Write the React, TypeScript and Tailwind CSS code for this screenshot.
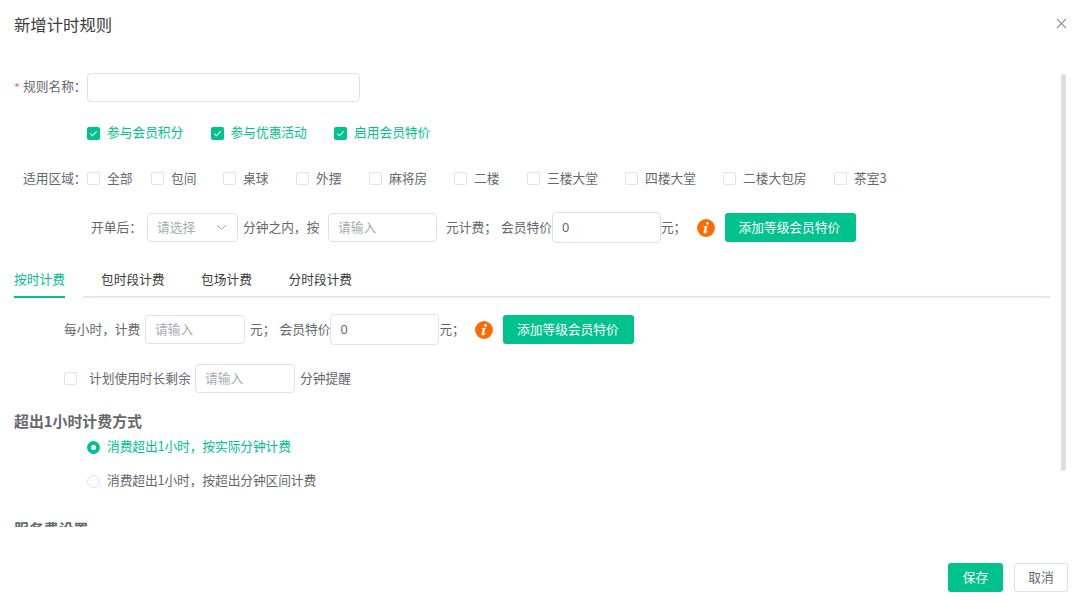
import React from "react";

type Tone = "plain" | "green";

function Tick({ on = false }: { on?: boolean }) {
  return on ? (
    <span className="flex h-[13px] w-[13px] shrink-0 items-center justify-center rounded-[2px] bg-[#00c28c]">
      <svg width="13" height="13" viewBox="0 0 13 13" fill="none" stroke="#fff" strokeWidth="1.1">
        <path d="M3.4 6.6 5.5 8.8 9.6 4.3" />
      </svg>
    </span>
  ) : (
    <span className="h-[13px] w-[13px] shrink-0 rounded-[2px] border border-[#e2e4ea] bg-white" />
  );
}

function Check({ label, on, className = "" }: { label: string; on?: boolean; className?: string }) {
  return (
    <label className={`flex shrink-0 items-center gap-[7px] ${className}`}>
      <Tick on={on} />
      <span className={on ? "pb-[2px] text-[#00c28c]" : "pb-px"}>{label}</span>
    </label>
  );
}

function Radio({ label, tone = "plain" }: { label: string; tone?: Tone }) {
  return (
    <label className="flex h-[18px] items-center gap-[7px]">
      {tone === "green" ? (
        <span className="flex h-[13px] w-[13px] items-center justify-center rounded-full bg-[#00c28c]">
          <span className="h-[5px] w-[5px] rounded-full bg-white" />
        </span>
      ) : (
        <span className="h-[13px] w-[13px] rounded-full border border-[#e0e2e9]" />
      )}
      <span className={tone === "green" ? "pb-[2px] tracking-[-0.09px] text-[#00c28c]" : "pb-[2px] tracking-[-0.09px]"}>
        {label}
      </span>
    </label>
  );
}

function Field({ value, placeholder, className }: { value?: string; placeholder?: string; className: string }) {
  return (
    <div className={`flex shrink-0 items-center rounded-[4px] border border-[#e0e2e9] bg-white pl-[9px] ${className}`}>
      {value ? (
        <span className="pb-px font-['Noto_Sans',sans-serif]">{value}</span>
      ) : (
        <span className="pb-px text-[#a8abb2]">{placeholder}</span>
      )}
    </div>
  );
}

function Info() {
  return (
    <svg className="shrink-0" width="18" height="18" viewBox="0 0 18 18">
      <circle cx="9" cy="9" r="8.9" fill="#ff6a00" />
      <circle cx="10.5" cy="4.4" r="1.4" fill="#fff" />
      <path d="M6.6 7.3 10.6 6.7 9 12.5Q8.9 13.1 9.4 12.7L10.4 11.7 10.8 12Q9.4 14.4 7.7 14.4 6.2 14.3 6.6 12.7L7.8 8.4Q7.8 7.9 6.6 7.9Z" fill="#fff" />
    </svg>
  );
}

function MemberPrice() {
  return (
    <div className="flex items-center pt-px">
      <span className="pb-px">会员特价</span>
      <Field value="0" className="h-[31px] w-[109px]" />
      <span className="w-[36px] pb-px">元；</span>
      <Info />
      <button className="ml-[10px] h-[29px] w-[131px] rounded-[3px] bg-[#00c28c] pr-[2px] pb-[2px] text-white">
        添加等级会员特价
      </button>
    </div>
  );
}

const areas = [
  { label: "全部", width: "w-[64px]" },
  { label: "包间", width: "w-[72px]" },
  { label: "桌球", width: "w-[73px]" },
  { label: "外摆", width: "w-[73px]" },
  { label: "麻将房", width: "w-[85px]" },
  { label: "二楼", width: "w-[73px]" },
  { label: "三楼大堂", width: "w-[98px]" },
  { label: "四楼大堂", width: "w-[98px]" },
  { label: "二楼大包房", width: "w-[111px]" },
  { label: "茶室3", width: "w-[60px]" },
];

export default function App() {
  return (
    <div className="flex h-[606px] w-[1080px] flex-col overflow-hidden bg-white font-['Noto_Sans_CJK_SC',sans-serif] text-[12.73px] leading-[18px] whitespace-nowrap text-[#66686c]">
      <header className="flex h-[50px] shrink-0 items-center justify-between pr-[13px] pl-[14px]">
        <h1 className="pb-[3px] text-[16.36px] text-[#3c3d40]">新增计时规则</h1>
        <svg className="-mt-[3px]" width="11" height="11" viewBox="0 0 11 11" stroke="#909399" strokeWidth="1.1">
          <path d="M1 1 10 10M10 1 1 10" />
        </svg>
      </header>

      <div className="flex h-[477px] shrink-0 overflow-hidden">
        <main className="w-[1050px] shrink-0 pl-[14px]">
          <div className="mt-[22px] flex h-[30px] items-center">
            <span className="w-[9px] pt-[2px] text-[#f56c6c]">*</span>
            <span className="w-[64px] pb-[2px]">规则名称：</span>
            <Field className="h-[29px] w-[273px]" />
          </div>

          <div className="mt-[21px] flex h-5 items-center pl-[73px]">
            <Check on label="参与会员积分" className="w-[123.5px]" />
            <Check on label="参与优惠活动" className="w-[123.5px]" />
            <Check on label="启用会员特价" />
          </div>

          <div className="mt-[25px] flex h-5 items-center">
            <span className="w-[73px] pb-px pl-[9px]">适用区域：</span>
            {areas.map((a) => (
              <Check key={a.label} label={a.label} className={a.width} />
            ))}
          </div>

          <div className="mt-[23px] flex h-8 items-center pl-[77px]">
            <span className="w-[56px] pb-px">开单后：</span>
            <div className="flex h-[29px] w-[91px] items-center justify-between rounded-[4px] border border-[#e0e2e9] pr-[10px] pl-[9px]">
              <span className="pb-px text-[#a8abb2]">请选择</span>
              <svg width="11" height="7" viewBox="0 0 11 7" fill="none" stroke="#a8abb2" strokeWidth="1">
                <path d="M1 1 5.5 5.5 10 1" />
              </svg>
            </div>
            <span className="w-[90px] pb-px pl-[5px]">分钟之内，按</span>
            <Field placeholder="请输入" className="h-[29px] w-[109px]" />
            <span className="w-[64px] pb-px pl-[9px]">元计费；</span>
            <MemberPrice />
          </div>

          <nav className="mt-[18px] flex h-[37px] items-stretch text-[#3c3d40]">
            <div className="flex w-[51px] items-center border-b-2 border-[#00c28c] text-[#00c28c]">按时计费</div>
            <div className="ml-[18px] flex flex-1 items-center border-b-2 border-[#e4e7ed] pl-[18px]">
              <span className="w-[100px]">包时段计费</span>
              <span className="w-[87.5px]">包场计费</span>
              <span>分时段计费</span>
            </div>
          </nav>

          <div className="mt-[15px] flex h-8 items-center pl-[50px]">
            <span className="w-[81px] pb-px">每小时，计费</span>
            <Field placeholder="请输入" className="h-[29px] w-[100px]" />
            <span className="w-[34.5px] pb-px pl-[5px]">元；</span>
            <MemberPrice />
          </div>

          <div className="mt-[17px] flex h-8 items-center pl-[50px]">
            <Tick />
            <span className="w-[118px] pb-px pl-[12px]">计划使用时长剩余</span>
            <Field placeholder="请输入" className="h-[29px] w-[100px]" />
            <span className="pb-px pl-[5px]">分钟提醒</span>
          </div>

          <h2 className="pt-[17px] text-[14.9px] leading-[20px] font-bold">超出1小时计费方式</h2>
          <div className="flex flex-col gap-[16px] pt-[7px] pl-[73px]">
            <Radio tone="green" label="消费超出1小时，按实际分钟计费" />
            <Radio label="消费超出1小时，按超出分钟区间计费" />
          </div>
          <h2 className="pt-[29px] text-[14.9px] leading-[20px] font-bold">服务费设置</h2>
        </main>
        <div className="ml-[11px] pt-[24px]">
          <div className="h-[397px] w-[5px] rounded-full bg-[#dddee0]" />
        </div>
      </div>

      <footer className="flex flex-1 items-start justify-end gap-[11px] pt-[36px] pr-[12px]">
        <button className="h-[29px] w-[55px] rounded-[3px] bg-[#00c28c] pb-[2px] text-white">保存</button>
        <button className="h-[29px] w-[54px] rounded-[3px] border border-[#e0e2e9] pb-[2px]">取消</button>
      </footer>
    </div>
  );
}
